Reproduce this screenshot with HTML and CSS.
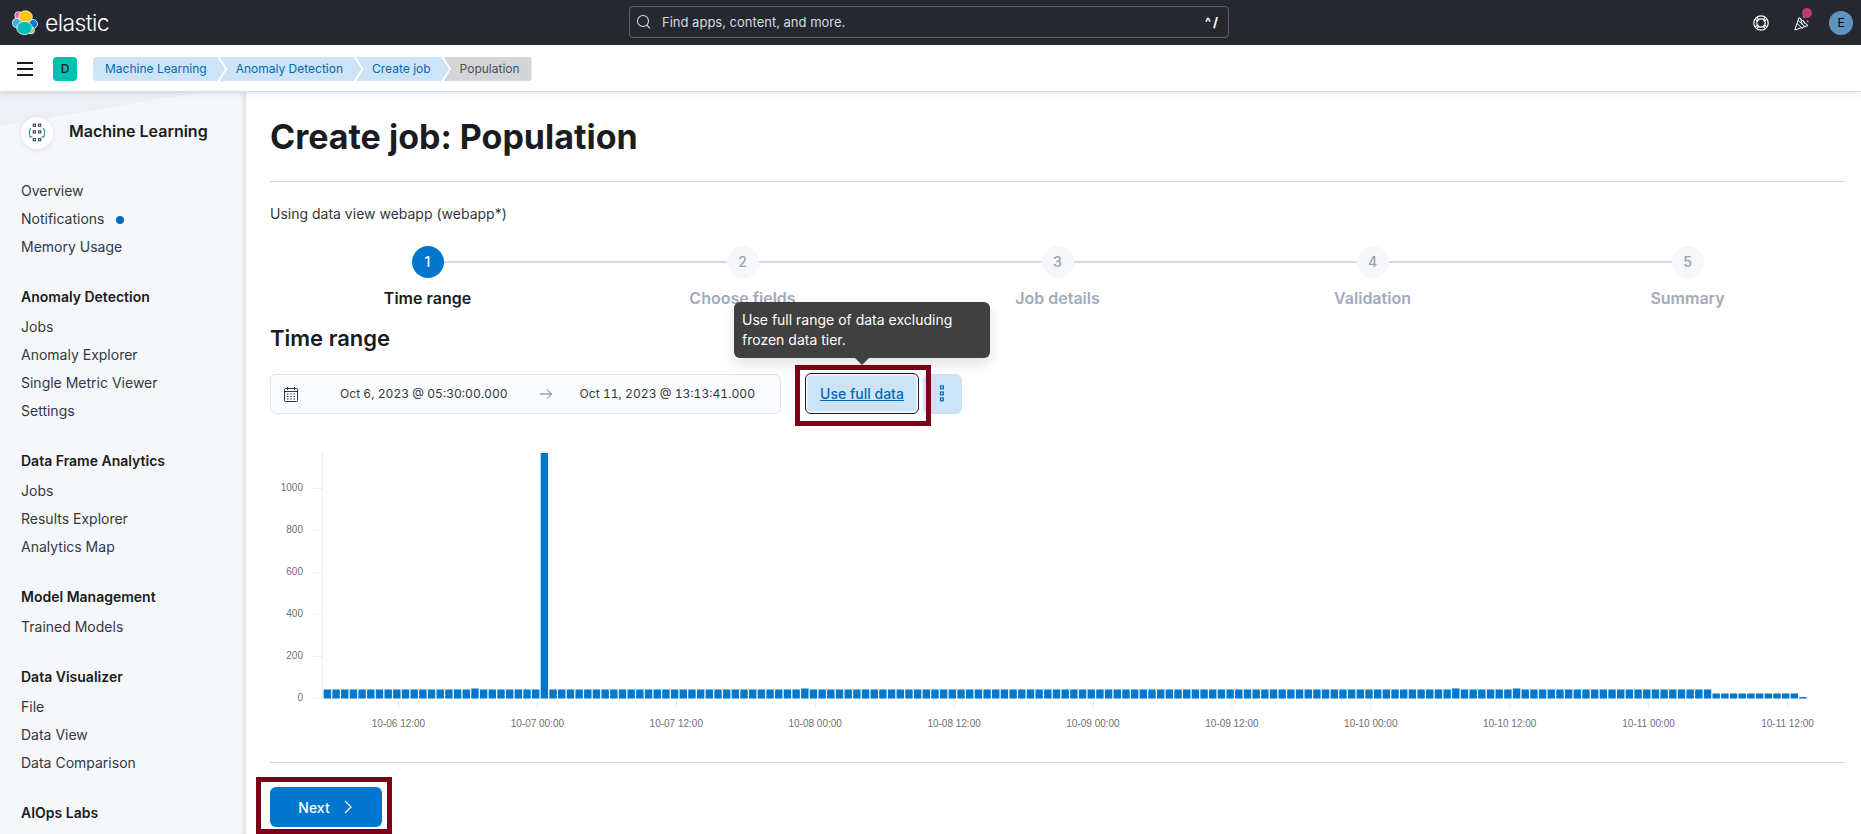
FILE: index.html
```html
<!DOCTYPE html>
<html lang="en">
<head>
    <meta charset="UTF-8">
    <meta name="viewport" content="width=device-width, initial-scale=1.0">
    <title>Create job: Population - Elastic</title>
    <link rel="stylesheet" href="styles.css">
</head>
<body>
    <header class="topbar">
        <div class="brand">
            <svg class="brand-logo" width="26" height="26" viewBox="0 0 26 26">
                <circle cx="6.5" cy="5.5" r="3.8" fill="#ef5ba1" stroke="#fff" stroke-width=".8"/>
                <circle cx="5" cy="13" r="4.8" fill="#3eb1e6" stroke="#fff" stroke-width=".8"/>
                <circle cx="21" cy="14" r="4.5" fill="#0a77cc" stroke="#fff" stroke-width=".8"/>
                <circle cx="19" cy="20.5" r="3.4" fill="#92c93f" stroke="#fff" stroke-width=".8"/>
                <ellipse cx="13.5" cy="6.8" rx="6.8" ry="6" fill="#fec514" stroke="#fff" stroke-width=".8"/>
                <ellipse cx="12.5" cy="18" rx="7.8" ry="6.6" fill="#02bcb7" stroke="#fff" stroke-width=".8"/>
            </svg>
            <span class="brand-name">elastic</span>
        </div>
        <div class="search">
            <svg width="16" height="16" viewBox="0 0 16 16" fill="none" stroke="#d4dae5" stroke-width="1.1">
                <circle cx="7" cy="7" r="5.5"/>
                <path d="M10.8 11l3.2 3.4"/>
            </svg>
            <span class="search-text">Find apps, content, and more.</span>
            <span class="search-keys">^/</span>
        </div>
        <div class="top-icons">
            <svg width="16" height="16" viewBox="0 0 16 16" fill="none" stroke="#fff" stroke-width="1.2">
                <circle cx="8" cy="8" r="7.2"/>
                <circle cx="8" cy="8" r="4.2"/>
                <path d="M2.2 4.2l3 2M3.8 2.2l2.2 3M13.8 4.2l-3 2M12.2 2.2l-2.2 3M2.2 11.8l3-2M3.8 13.8l2.2-3M13.8 11.8l-3-2M12.2 13.8l-2.2-3"/>
            </svg>
            <span class="cheer">
                <svg width="16" height="16" viewBox="0 0 16 16" fill="none" stroke="#fff" stroke-width="1">
                    <path d="M.8 15L5 2.5 14 10.5z"/>
                    <path d="M3 8.5l5.5 5M4.2 5.5l7 6.3M6.5 3l1.8 7M9.5 5.5l1 3"/>
                    <path d="M9 1.5l1.5 1M13 6l1.5.3"/>
                </svg>
                <span class="cheer-badge"></span>
            </span>
            <span class="avatar">E</span>
        </div>
    </header>

    <nav class="subbar">
        <svg width="16" height="14" viewBox="0 0 16 14" fill="#1a1c21">
            <rect y="0" width="16" height="2"/>
            <rect y="6" width="16" height="2"/>
            <rect y="12" width="16" height="2"/>
        </svg>
        <span class="space-tile">D</span>
        <div class="crumbs">
            <span class="crumb crumb-first">Machine Learning</span>
            <span class="crumb">Anomaly Detection</span>
            <span class="crumb">Create job</span>
            <span class="crumb crumb-last">Population</span>
        </div>
    </nav>

    <div class="page">
        <aside class="sidebar">
            <div class="side-title">
                <span class="side-logo">
                    <svg width="18" height="20" viewBox="0 0 16 18" fill="none">
                        <g fill="none" stroke="#343741" stroke-width=".9">
                            <rect x="4.6" y="1" width="2" height="2"/>
                            <rect x="9.4" y="1" width="2" height="2"/>
                            <rect x="4.6" y="7" width="2" height="2"/>
                            <rect x="9.4" y="7" width="2" height="2"/>
                            <rect x="4.6" y="14" width="2" height="2"/>
                            <rect x="9.4" y="14" width="2" height="2"/>
                        </g>
                        <path d="M2.5 4.5C.6 6.5.6 10.5 2.5 13M13.5 4.5c1.9 2 1.9 6 0 8.5M1 12.5h3M12 12.5h3" stroke="#3f9d99" stroke-width="1.1"/>
                    </svg>
                </span>
                <span class="side-name">Machine Learning</span>
            </div>
            <ul class="side-group">
                <li>Overview</li>
                <li>Notifications <span class="side-dot"></span></li>
                <li>Memory Usage</li>
            </ul>
            <ul class="side-group">
                <li class="side-head">Anomaly Detection</li>
                <li>Jobs</li>
                <li>Anomaly Explorer</li>
                <li>Single Metric Viewer</li>
                <li>Settings</li>
            </ul>
            <ul class="side-group">
                <li class="side-head">Data Frame Analytics</li>
                <li>Jobs</li>
                <li>Results Explorer</li>
                <li>Analytics Map</li>
            </ul>
            <ul class="side-group">
                <li class="side-head">Model Management</li>
                <li>Trained Models</li>
            </ul>
            <ul class="side-group">
                <li class="side-head">Data Visualizer</li>
                <li>File</li>
                <li>Data View</li>
                <li>Data Comparison</li>
            </ul>
            <ul class="side-group">
                <li class="side-head">AIOps Labs</li>
            </ul>
        </aside>

        <main class="content">
            <h1>Create job: Population</h1>
            <hr class="rule">
            <p class="data-view">Using data view webapp (webapp*)</p>

            <div class="steps">
                <div class="step active"><span class="step-num">1</span><span class="step-label">Time range</span></div>
                <div class="step"><span class="step-num">2</span><span class="step-label">Choose fields</span></div>
                <div class="step"><span class="step-num">3</span><span class="step-label">Job details</span></div>
                <div class="step"><span class="step-num">4</span><span class="step-label">Validation</span></div>
                <div class="step last"><span class="step-num">5</span><span class="step-label">Summary</span></div>
            </div>

            <h2>Time range</h2>

            <div class="range-row">
                <div class="picker">
                    <svg class="picker-icon" width="16" height="16" viewBox="0 0 16 16" fill="none" stroke="#343741">
                        <rect x="1.5" y="2.5" width="13" height="13" rx="1"/>
                        <path d="M1.5 5.5h13M4.5 1v3M11.5 1v3"/>
                        <path d="M4 8h1.5M7.2 8h1.5M10.5 8h1.5M4 10.5h1.5M7.2 10.5h1.5M10.5 10.5h1.5M4 13h1.5M7.2 13h1.5M10.5 13h1.5" stroke-width="1.2"/>
                    </svg>
                    <span class="picker-date">Oct 6, 2023 @ 05:30:00.000</span>
                    <svg class="picker-arrow" width="14" height="14" viewBox="0 0 14 14" fill="none" stroke="#69707d">
                        <path d="M1 7h11.5M8 2.5L12.5 7 8 11.5"/>
                    </svg>
                    <span class="picker-date">Oct 11, 2023 @ 13:13:41.000</span>
                </div>
                <div class="marked full-wrap">
                    <div class="tooltip">Use full range of data excluding frozen data tier.</div>
                    <button class="full-btn">Use full data</button>
                </div>
                <button class="more-btn">
                    <svg width="6" height="17" viewBox="0 0 6 17" fill="none" stroke="#006bb8" stroke-width="1.2">
                        <rect x="1.5" y="1" width="2.8" height="2.8"/>
                        <rect x="1.5" y="7" width="2.8" height="2.8"/>
                        <rect x="1.5" y="13" width="2.8" height="2.8"/>
                    </svg>
                </button>
            </div>

            <div id="chart" class="chart"></div>

            <hr class="rule rule-bottom">

            <div class="marked next-wrap">
                <button class="next-btn">
                    Next
                    <svg width="12" height="16" viewBox="0 0 12 16" fill="none" stroke="#fff" stroke-width="1.2">
                        <path d="M3 2l6 6-6 6"/>
                    </svg>
                </button>
            </div>
        </main>
    </div>

    <script src="chart.js"></script>
</body>
</html>
```

FILE: styles.css
```css
* {
    box-sizing: border-box;
}
html, body {
    height: 100%;
}
body {
    margin: 0;
    display: flex;
    flex-direction: column;
    overflow: hidden;
    font-family: Inter, "Liberation Sans", sans-serif;
    font-size: 14px;
    color: #343741;
    background: #fff;
}

/* top bar */
.topbar {
    flex: none;
    height: 45px;
    display: flex;
    align-items: center;
    background: #25282f;
    padding: 0 8px 0 12px;
}
.brand {
    width: 617px;
    display: flex;
    align-items: center;
    gap: 7px;
}
.brand-name {
    color: #fff;
    font-size: 23px;
    font-weight: 300;
    letter-spacing: -0.6px;
    line-height: 30px;
}
.search {
    width: 600px;
    height: 32px;
    display: flex;
    align-items: center;
    gap: 10px;
    padding: 0 8px 0 6px;
    border: 1px solid #5d6068;
    border-radius: 4px;
    margin-bottom: 1px;
}
.search-text {
    flex: 1;
    color: #d4dae5;
    font-size: 13px;
}
.search-keys {
    color: #fff;
    font-size: 13px;
    font-weight: 700;
    letter-spacing: 2px;
}
.top-icons {
    margin-left: auto;
    display: flex;
    align-items: center;
}
.top-icons > svg {
    margin-right: 25px;
}
.cheer {
    position: relative;
    display: flex;
    margin-right: 19px;
}
.cheer-badge {
    position: absolute;
    top: -7px;
    left: 8px;
    width: 10px;
    height: 10px;
    border-radius: 50%;
    background: #bd3a7a;
}
.avatar {
    width: 24px;
    height: 24px;
    border-radius: 50%;
    background: #5f94c2;
    color: #000;
    font-size: 12px;
    line-height: 24px;
    text-align: center;
}

/* breadcrumb bar */
.subbar {
    flex: none;
    height: 47px;
    display: flex;
    align-items: center;
    padding: 2px 0 0 17px;
    background: #fff;
    border-bottom: 1px solid #d3dae6;
    box-shadow: 0 2px 6px rgba(152, 162, 179, 0.25);
    position: relative;
    z-index: 2;
}
.space-tile {
    width: 24px;
    height: 24px;
    margin-left: 20px;
    border-radius: 4px;
    background: #00bfb3;
    color: #1a1c21;
    font-size: 12px;
    font-weight: 500;
    line-height: 24px;
    text-align: center;
}
.crumbs {
    display: flex;
    margin-left: 16px;
}
.crumb {
    height: 24px;
    padding: 0 18.5px 0 16px;
    margin-left: -5.5px;
    background: #cce4f5;
    color: #006bb8;
    font-size: 12px;
    line-height: 24px;
    clip-path: polygon(0 0, calc(100% - 8px) 0, 100% 50%, calc(100% - 8px) 100%, 0 100%, 7.5px 50%);
}
.crumb-first {
    margin-left: 0;
    padding-left: 12px;
    border-radius: 4px 0 0 4px;
    clip-path: polygon(0 0, calc(100% - 8px) 0, 100% 50%, calc(100% - 8px) 100%, 0 100%);
}
.crumb-last {
    padding-right: 12px;
    background: #d4d5d8;
    color: #4b4f58;
    border-radius: 0 4px 4px 0;
    clip-path: polygon(0 0, 100% 0, 100% 100%, 0 100%, 7.5px 50%);
}

/* page */
.page {
    flex: 1;
    display: flex;
    min-height: 0;
}
.sidebar {
    flex: none;
    width: 246px;
    padding: 25px 0 0 21px;
    background: #f5f7fb;
    box-shadow: inset -6px 0 5px -4px rgba(152, 162, 179, 0.3);
    position: relative;
}
.sidebar::before {
    content: "";
    position: absolute;
    top: 0;
    left: 0;
    width: 200px;
    height: 34px;
    background: #edf0f5;
    clip-path: polygon(0 0, 100% 0, 0 100%);
}
.side-title {
    position: relative;
    display: flex;
    gap: 16px;
    height: 32px;
    margin-bottom: 28px;
}
.side-logo {
    width: 32px;
    height: 32px;
    display: flex;
    align-items: center;
    justify-content: center;
    border-radius: 50%;
    background: #fff;
    box-shadow: 0 1px 5px rgba(152, 162, 179, 0.3);
}
.side-name {
    color: #1a1c21;
    font-size: 16px;
    font-weight: 600;
    line-height: 28px;
}
.side-group {
    list-style: none;
    margin: 0 0 20px;
    padding: 0;
}
.side-group li {
    line-height: 28px;
}
.side-group .side-head {
    line-height: 32px;
    font-weight: 600;
    color: #1a1c21;
}
.side-dot {
    display: inline-block;
    width: 8px;
    height: 8px;
    margin-left: 8px;
    border-radius: 50%;
    background: #006bb8;
}

.content {
    flex: 1;
    min-width: 0;
    padding: 25px 16px 0 24px;
}
h1 {
    margin: 0;
    color: #1a1c21;
    font-size: 34px;
    font-weight: 700;
    line-height: 40px;
}
.rule {
    margin: 24px 0 0;
    border: none;
    border-top: 1px solid #d3dae6;
}
.data-view {
    margin: 22px 0 0;
    line-height: 20px;
}

/* steps */
.steps {
    display: grid;
    grid-template-columns: repeat(5, 1fr);
    margin-top: 22px;
}
.step {
    position: relative;
    display: flex;
    flex-direction: column;
    align-items: center;
    gap: 10px;
}
.step::after {
    content: "";
    position: absolute;
    top: 15px;
    left: 50%;
    width: 100%;
    height: 2px;
    background: #d3dae6;
}
.step.last::after {
    display: none;
}
.step-num {
    position: relative;
    z-index: 1;
    width: 32px;
    height: 32px;
    border-radius: 50%;
    background: #f5f7fa;
    color: #98a2b3;
    font-weight: 500;
    line-height: 32px;
    text-align: center;
}
.step-label {
    color: #a2abba;
    font-size: 16px;
    font-weight: 600;
    line-height: 20px;
}
.active .step-num {
    background: #0077cc;
    color: #fff;
}
.active .step-label {
    color: #1a1c21;
}

h2 {
    margin: 16px 0 0;
    color: #1a1c21;
    font-size: 22px;
    font-weight: 600;
    line-height: 28px;
}

/* date range */
.range-row {
    display: flex;
    align-items: center;
    margin-top: 21px;
}
.picker {
    width: 511px;
    height: 40px;
    display: flex;
    align-items: center;
    padding: 0 0 0 12px;
    border: 1px solid #dfe3ec;
    border-radius: 6px;
    background: #fbfcfd;
    font-size: 12.1px;
    font-variant-numeric: tabular-nums;
}
.picker-icon {
    margin-right: 41px;
}
.picker-arrow {
    margin: 0 27px 0 31px;
}
.marked {
    position: relative;
}
.marked::after {
    content: "";
    position: absolute;
    border: 5px solid #7e0018;
    pointer-events: none;
}
.full-wrap {
    margin-left: 24px;
}
.full-wrap::after {
    inset: -8px -12px -12px -10px;
}
.full-btn {
    display: block;
    width: 114px;
    height: 41px;
    padding: 0;
    border: 1px solid #1a1c21;
    border-radius: 6px;
    background: #cce4f5;
    box-shadow: inset 0 0 0 1.5px #fff;
    color: #006bb8;
    font: 500 14px Inter, sans-serif;
    text-decoration: underline;
}
.tooltip {
    position: absolute;
    z-index: 3;
    left: -71px;
    bottom: calc(100% + 15px);
    width: 256px;
    padding: 8px;
    border-radius: 6px;
    background: #404040;
    color: #fff;
    line-height: 20px;
    box-shadow: 0 6px 14px rgba(0, 0, 0, 0.12);
}
.tooltip::after {
    content: "";
    position: absolute;
    top: 100%;
    left: 50%;
    margin-left: -7px;
    border: 7px solid transparent;
    border-top-color: #404040;
    border-bottom: none;
}
.more-btn {
    width: 39px;
    height: 40px;
    margin-left: 3.5px;
    padding: 0;
    border: none;
    border-radius: 6px;
    background: #cce4f5;
}
.more-btn svg {
    display: block;
    margin: 0 auto;
}

.chart {
    margin-top: 32px;
    height: 300px;
}
.chart svg {
    display: block;
}
.chart text {
    font-family: "Liberation Sans", Arial, sans-serif;
    font-size: 10px;
    fill: #707070;
}

.rule-bottom {
    margin-top: 16px;
}
.next-wrap {
    width: 112px;
    margin-top: 24px;
}
.next-wrap::after {
    inset: -10px -10px -7px -14px;
}
.next-btn {
    width: 112px;
    height: 40px;
    display: flex;
    align-items: center;
    justify-content: center;
    gap: 12px;
    padding: 0;
    border: none;
    border-radius: 6px;
    background: #0077cc;
    color: #fff;
    font: 500 14px Inter, sans-serif;
}
```

FILE: chart.js
```js
// histogram of event counts, coordinates are in page pixels
const NS = "http://www.w3.org/2000/svg";
const svg = document.createElementNS(NS, "svg");
svg.setAttribute("width", "1575");
svg.setAttribute("height", "300");
svg.setAttribute("viewBox", "270 445 1575 300");

function add(tag, attrs, text) {
    const el = document.createElementNS(NS, tag);
    for (const key in attrs) el.setAttribute(key, attrs[key]);
    if (text) el.textContent = text;
    svg.appendChild(el);
}

const baseline = 697.5;

// y axis
add("rect", { x: 322, y: 452, width: 1, height: 246, fill: "#eeeeee" });
[0, 200, 400, 600, 800, 1000].forEach((value, i) => {
    const y = 697 - i * 42;
    add("rect", { x: 313, y: y, width: 9, height: 1, fill: "#eeeeee" });
    add("text", { x: 303, y: y + 3, "text-anchor": "end" }, String(value));
});

// x axis
const labels = [
    "10-06 12:00", "10-07 00:00", "10-07 12:00", "10-08 00:00",
    "10-08 12:00", "10-09 00:00", "10-09 12:00", "10-10 00:00",
    "10-10 12:00", "10-11 00:00", "10-11 12:00"
];
labels.forEach((label, i) => {
    const x = 398 + i * 138.9;
    add("rect", { x: x, y: 698, width: 1, height: 10, fill: "#eeeeee" });
    add("text", { x: x + 0.5, y: 726, "text-anchor": "middle" }, label);
});

// bars
const taller = [17, 55, 130, 137];
for (let n = 0; n < 171; n++) {
    let height = 9;
    if (taller.includes(n)) height = 10;
    if (n === 25) height = baseline - 452;
    if (n >= 160) height = 5;
    if (n === 170) height = 1.5;
    add("rect", {
        x: 323.7 + n * 8.68,
        y: baseline - height,
        width: 7.4,
        height: height,
        fill: "#0077cc"
    });
}

document.getElementById("chart").appendChild(svg);
```
